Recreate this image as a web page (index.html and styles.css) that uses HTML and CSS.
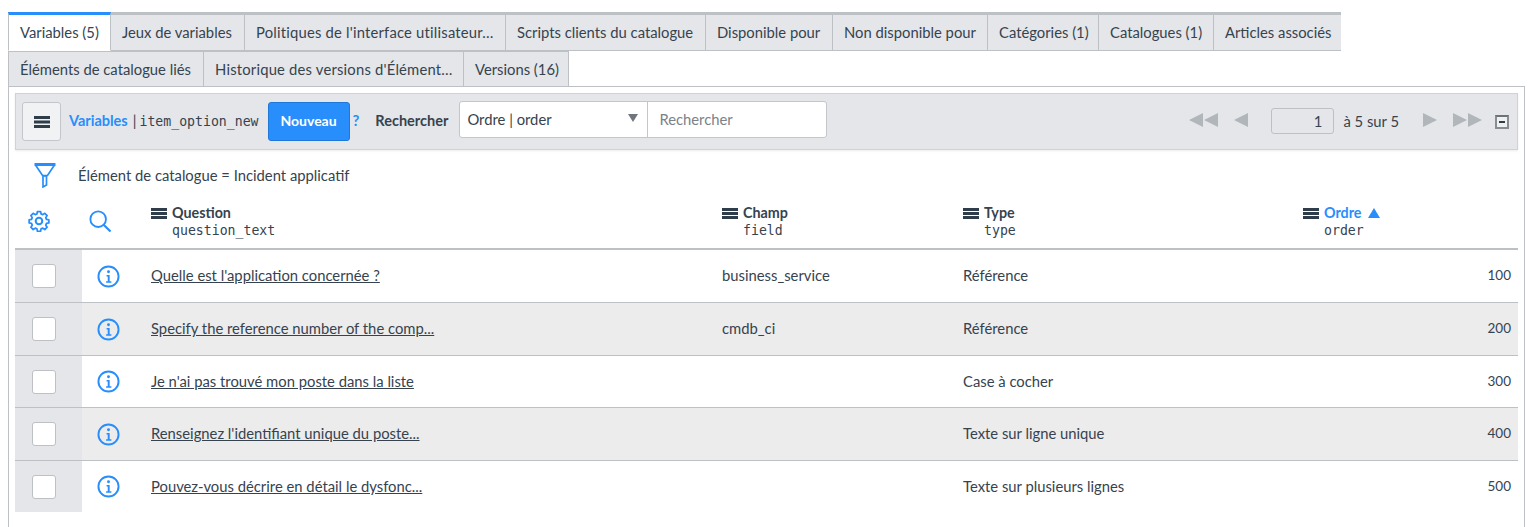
FILE: index.html
```html
<!DOCTYPE html>
<html lang="fr">
<head>
    <meta charset="UTF-8">
    <title>Variables</title>
    <link rel="stylesheet" href="styles.css">
</head>
<body>
    <svg class="sprites" width="0" height="0">
        <symbol id="info" viewBox="0 0 24 24">
            <circle cx="12" cy="12" r="10.500" fill="none" stroke="#278efc" stroke-width="2"/>
            <circle cx="12" cy="7" r="1.500" fill="#278efc"/>
            <path d="M10 10.500h3.200V17H15v1.500H9.500V17h1.700v-5H10z" fill="#278efc"/>
        </symbol>
    </svg>

    <div class="tabs">
        <div class="tab-row">
            <div class="tab active">Variables (5)</div>
            <div class="tab">Jeux de variables</div>
            <div class="tab long">Politiques de l'interface utilisateur…</div>
            <div class="tab">Scripts clients du catalogue</div>
            <div class="tab">Disponible pour</div>
            <div class="tab">Non disponible pour</div>
            <div class="tab">Catégories (1)</div>
            <div class="tab">Catalogues (1)</div>
            <div class="tab">Articles associés</div>
        </div>
        <div class="tab-row second">
            <div class="tab">Éléments de catalogue liés</div>
            <div class="tab long">Historique des versions d'Élément…</div>
            <div class="tab">Versions (16)</div>
        </div>
    </div>

    <div class="panel">
        <div class="toolbar">
            <button class="menu-btn" aria-label="Menu">
                <svg width="16" height="12" viewBox="0 0 16 12"><path d="M0 0h16v3H0zM0 4.500h16v3H0zM0 9h16v3H0z" fill="#2e3d49"/></svg>
            </button>
            <span class="list-title">Variables</span>
            <span class="sep">|</span>
            <span class="mono">item_option_new</span>
            <button class="new-btn">Nouveau</button>
            <span class="help">?</span>
            <span class="search-label">Rechercher</span>
            <div class="search">
                <div class="search-select">Ordre | order<span class="caret"></span></div>
                <div class="search-input">Rechercher</div>
            </div>
            <div class="pager">
                <svg class="pager-icon" width="29" height="14" viewBox="0 0 29 14"><path d="M14 0v14L0 7zM29 0v14L15 7z"/></svg>
                <svg class="pager-icon one" width="14" height="14" viewBox="0 0 14 14"><path d="M14 0v14L0 7z"/></svg>
                <div class="page-box">1</div>
                <span class="page-text">à 5 sur 5</span>
                <svg class="pager-icon next" width="14" height="14" viewBox="0 0 14 14"><path d="M0 0v14l14-7z"/></svg>
                <svg class="pager-icon last" width="29" height="14" viewBox="0 0 29 14"><path d="M0 0v14l14-7zM15 0v14l14-7z"/></svg>
                <div class="collapse"></div>
            </div>
        </div>

        <div class="filter">
            <svg width="22" height="25" viewBox="0 0 22 25" fill="none" stroke="#278efc" stroke-width="1.700"><path d="M.5 1.500h21" stroke-width="3"/><path d="M1.500 2l7 10.500h5L20.500 2"/><path d="M9 13v11l3.500-2V13z"/></svg>
            <span>Élément de catalogue = Incident applicatif</span>
        </div>

        <div class="grid head">
            <div class="cell-check">
                <svg width="22" height="22" viewBox="0 0 24 24" fill="none" stroke="#278efc" stroke-width="2.200" stroke-linejoin="round"><circle cx="12" cy="12" r="3.600"/><path d="M10 1.500h4l.6 3 2.200.9 2.600-1.700 2.900 2.900-1.700 2.600.9 2.200 3 .6v4l-3 .6-.9 2.200 1.700 2.600-2.900 2.900-2.600-1.700-2.200.9-.6 3h-4l-.6-3-2.200-.9-2.600 1.700-2.900-2.900 1.700-2.600-.9-2.200-3-.6v-4l3-.6.9-2.200-1.700-2.600 2.900-2.900 2.600 1.700 2.200-.9z" transform="translate(12 12) scale(.86) translate(-12 -13.500)"/></svg>
            </div>
            <div class="cell-info">
                <svg width="22" height="22" viewBox="0 0 24 24" fill="none" stroke="#278efc" stroke-width="2"><circle cx="10" cy="10" r="8.500"/><path d="M16 16l7.500 7.500" stroke-width="2.400"/></svg>
            </div>
            <div class="col"><div class="col-name"><span class="bars"></span>Question</div><div class="col-sub">question_text</div></div>
            <div class="col"><div class="col-name"><span class="bars"></span>Champ</div><div class="col-sub">field</div></div>
            <div class="col"><div class="col-name"><span class="bars"></span>Type</div><div class="col-sub">type</div></div>
            <div class="col"><div class="col-name sorted"><span class="bars"></span>Ordre<span class="sort-arrow"></span></div><div class="col-sub">order</div></div>
        </div>

        <div class="grid row">
            <div class="cell-check"><span class="checkbox"></span></div>
            <div class="cell-info"><svg class="info"><use href="#info"/></svg></div>
            <div class="cell"><a href="#">Quelle est l'application concernée ?</a></div>
            <div class="cell">business_service</div>
            <div class="cell">Référence</div>
            <div class="cell num">100</div>
        </div>
        <div class="grid row alt">
            <div class="cell-check"><span class="checkbox"></span></div>
            <div class="cell-info"><svg class="info"><use href="#info"/></svg></div>
            <div class="cell"><a href="#">Specify the reference number of the comp...</a></div>
            <div class="cell">cmdb_ci</div>
            <div class="cell">Référence</div>
            <div class="cell num">200</div>
        </div>
        <div class="grid row short">
            <div class="cell-check"><span class="checkbox"></span></div>
            <div class="cell-info"><svg class="info"><use href="#info"/></svg></div>
            <div class="cell"><a href="#">Je n'ai pas trouvé mon poste dans la liste</a></div>
            <div class="cell"></div>
            <div class="cell">Case à cocher</div>
            <div class="cell num">300</div>
        </div>
        <div class="grid row alt">
            <div class="cell-check"><span class="checkbox"></span></div>
            <div class="cell-info"><svg class="info"><use href="#info"/></svg></div>
            <div class="cell"><a href="#">Renseignez l'identifiant unique du poste...</a></div>
            <div class="cell"></div>
            <div class="cell">Texte sur ligne unique</div>
            <div class="cell num">400</div>
        </div>
        <div class="grid row last">
            <div class="cell-check"><span class="checkbox"></span></div>
            <div class="cell-info"><svg class="info"><use href="#info"/></svg></div>
            <div class="cell"><a href="#">Pouvez-vous décrire en détail le dysfonc...</a></div>
            <div class="cell"></div>
            <div class="cell">Texte sur plusieurs lignes</div>
            <div class="cell num">500</div>
        </div>
    </div>
</body>
</html>
```

FILE: styles.css
```css
* {
  box-sizing: border-box;
}

html, body {
  overflow: hidden;
}

body {
  margin: 0;
  height: 527px;
  padding: 12px 3px 0 8px;
  background-color: #fff;
  color: #36434f;
  font-family: Lato, "Open Sans", sans-serif;
  font-size: 14.800px;
}

.sprites {
  position: absolute;
}

/* tabs */
.tab-row {
  display: flex;
  height: 39px;
}

.tab-row.second {
  height: 35px;
}

.tab {
  display: flex;
  align-items: center;
  padding: 0 0 1px 11px;
  background-color: #e4e6e9;
  border-top: 3px solid #bdc0c4;
  border-bottom: 1px solid #bdc0c4;
  border-right: 1px solid #bdc0c4;
  white-space: nowrap;
}

.tab.long {
  letter-spacing: 0.2px;
}

.tab.active {
  background-color: #fff;
  border-top-color: #278efc;
  border-bottom-color: #fff;
  border-left: 1px solid #bdc0c4;
}

.tab-row:first-child .tab:nth-child(1) { width: 103px; }
.tab-row:first-child .tab:nth-child(2) { width: 134px; }
.tab-row:first-child .tab:nth-child(3) { width: 261px; }
.tab-row:first-child .tab:nth-child(4) { width: 200px; }
.tab-row:first-child .tab:nth-child(5) { width: 127px; }
.tab-row:first-child .tab:nth-child(6) { width: 155px; }
.tab-row:first-child .tab:nth-child(7) { width: 111px; }
.tab-row:first-child .tab:nth-child(8) { width: 115px; }
.tab-row:first-child .tab:nth-child(9) { width: 127px; border-right: 0; }

.tab-row.second .tab:nth-child(1) { width: 196px; border-left: 1px solid #bdc0c4; }
.tab-row.second .tab:nth-child(2) { width: 260px; }
.tab-row.second .tab:nth-child(3) { width: 105px; }

.tab-row.second .tab {
  padding-bottom: 0;
  border-top-width: 1px;
  border-bottom: 0;
}

/* panel */
.panel {
  height: 460px;
  padding: 6px 6px 0;
  border: 1px solid #bdc0c4;
}

.toolbar {
  display: flex;
  align-items: center;
  height: 57px;
  padding: 0 8px 0 6px;
  background-color: #e4e6e9;
  border: 1px solid #d0d3d6;
  box-shadow: 0 1px 2px rgba(0, 0, 0, 0.08);
}

.menu-btn {
  display: flex;
  align-items: center;
  justify-content: center;
  width: 39px;
  height: 39px;
  padding: 0;
  border: 1px solid #c3c6ca;
  border-radius: 3px;
  background-color: #f1f2f4;
}

.list-title {
  margin: 0 0 3px 8px;
  color: #278efc;
  font-size: 14.500px;
  font-weight: 700;
}

.sep {
  margin: 0 3px 3px 5px;
}

.mono {
  font-family: "DejaVu Sans Mono", monospace;
  font-size: 13.200px;
}

.new-btn {
  width: 82px;
  height: 39px;
  margin-left: 9px;
  padding: 0 0 3px;
  border: 1px solid #1f78d8;
  border-radius: 3px;
  background-color: #278efc;
  color: #fff;
  font-family: inherit;
  font-size: 14px;
  font-weight: 700;
}

.help {
  margin: 0 0 4px 3px;
  color: #278efc;
  font-weight: 700;
}

.search-label {
  margin: 0 0 3px 16px;
  font-size: 14.500px;
  font-weight: 700;
}

.search {
  display: flex;
  width: 368px;
  height: 37px;
  margin: 0 0 4px 11px;
  background-color: #fff;
  border: 1px solid #c3c6ca;
  border-radius: 3px;
}

.search-select {
  position: relative;
  width: 188px;
  padding: 0 7px;
  line-height: 35px;
  border-right: 1px solid #c3c6ca;
}

.caret {
  position: absolute;
  right: 9px;
  top: 12px;
  border-left: 5.500px solid transparent;
  border-right: 5.500px solid transparent;
  border-top: 8px solid #6f767d;
}

.search-input {
  padding: 0 11px;
  line-height: 35px;
  color: #7b8289;
}

.pager {
  display: flex;
  align-items: center;
  margin-left: auto;
}

.pager-icon {
  margin-bottom: 4px;
  fill: #b0b6ba;
}

.pager-icon.one {
  margin-left: 16px;
}

.page-box {
  width: 63px;
  height: 26px;
  margin: 0 0 2px 23px;
  padding-right: 11px;
  line-height: 24px;
  text-align: right;
  border: 1px solid #bdc0c4;
  border-radius: 3px;
}

.page-text {
  margin: 0 0 2px 9px;
}

.pager-icon.next {
  margin-left: 24px;
}

.pager-icon.last {
  margin-left: 16px;
}

.collapse {
  position: relative;
  width: 14px;
  height: 14px;
  margin-left: 13px;
  border: 2px solid #8a8d90;
  border-top-color: #6f7275;
  background-color: #eef0f1;
}

.collapse::after {
  content: "";
  position: absolute;
  left: 2px;
  top: 4px;
  width: 6px;
  height: 2px;
  background-color: #2e3d49;
}

/* filter line */
.filter {
  display: flex;
  align-items: center;
  gap: 22px;
  height: 44px;
  padding: 6px 0 0 19px;
}

/* list */
.grid {
  display: grid;
  grid-template-columns: 67px 69px 571px 241px 340px 1fr;
  align-items: center;
}

.head {
  height: 56px;
  align-items: start;
  border-bottom: 2px solid #bdc0c4;
}

.head .cell-check {
  padding: 16px 0 0 13px;
}

.head .cell-info {
  padding: 16px 0 0 7px;
}

.col {
  padding-top: 10px;
}

.col-name {
  display: flex;
  align-items: center;
  font-size: 14.300px;
  font-weight: 700;
  line-height: 18px;
}

.col-name.sorted {
  color: #278efc;
}

.bars {
  width: 16px;
  height: 11px;
  margin-right: 5px;
  background: linear-gradient(#2e3d49 0 3px, transparent 3px 4px, #2e3d49 4px 7px, transparent 7px 8px, #2e3d49 8px 11px);
}

.sort-arrow {
  margin-left: 7px;
  border-left: 6px solid transparent;
  border-right: 6px solid transparent;
  border-bottom: 10px solid #278efc;
}

.col-sub {
  margin-left: 21px;
  font-family: "DejaVu Sans Mono", monospace;
  font-size: 13.200px;
  line-height: 18px;
}

.row {
  height: 53px;
  border-bottom: 1px solid #bdc0c4;
}

.row.short {
  height: 52px;
}

.row.alt {
  background-color: #ececec;
}

.row.last {
  height: 51px;
  border-bottom: 0;
}

.row .cell-check {
  display: flex;
  align-items: center;
  align-self: stretch;
  padding-left: 17px;
  background-color: #e4e6e9;
}

.row .cell-info {
  display: flex;
  padding-left: 15px;
}

.info {
  width: 23px;
  height: 23px;
}

.cell {
  margin-bottom: 2px;
}

.checkbox {
  display: block;
  width: 24px;
  height: 24px;
  background-color: #fff;
  border: 1px solid #bdc0c4;
  border-radius: 3px;
}

.row a {
  color: #36434f;
}

.num {
  padding-right: 7px;
  font-size: 13.500px;
  text-align: right;
}
```
